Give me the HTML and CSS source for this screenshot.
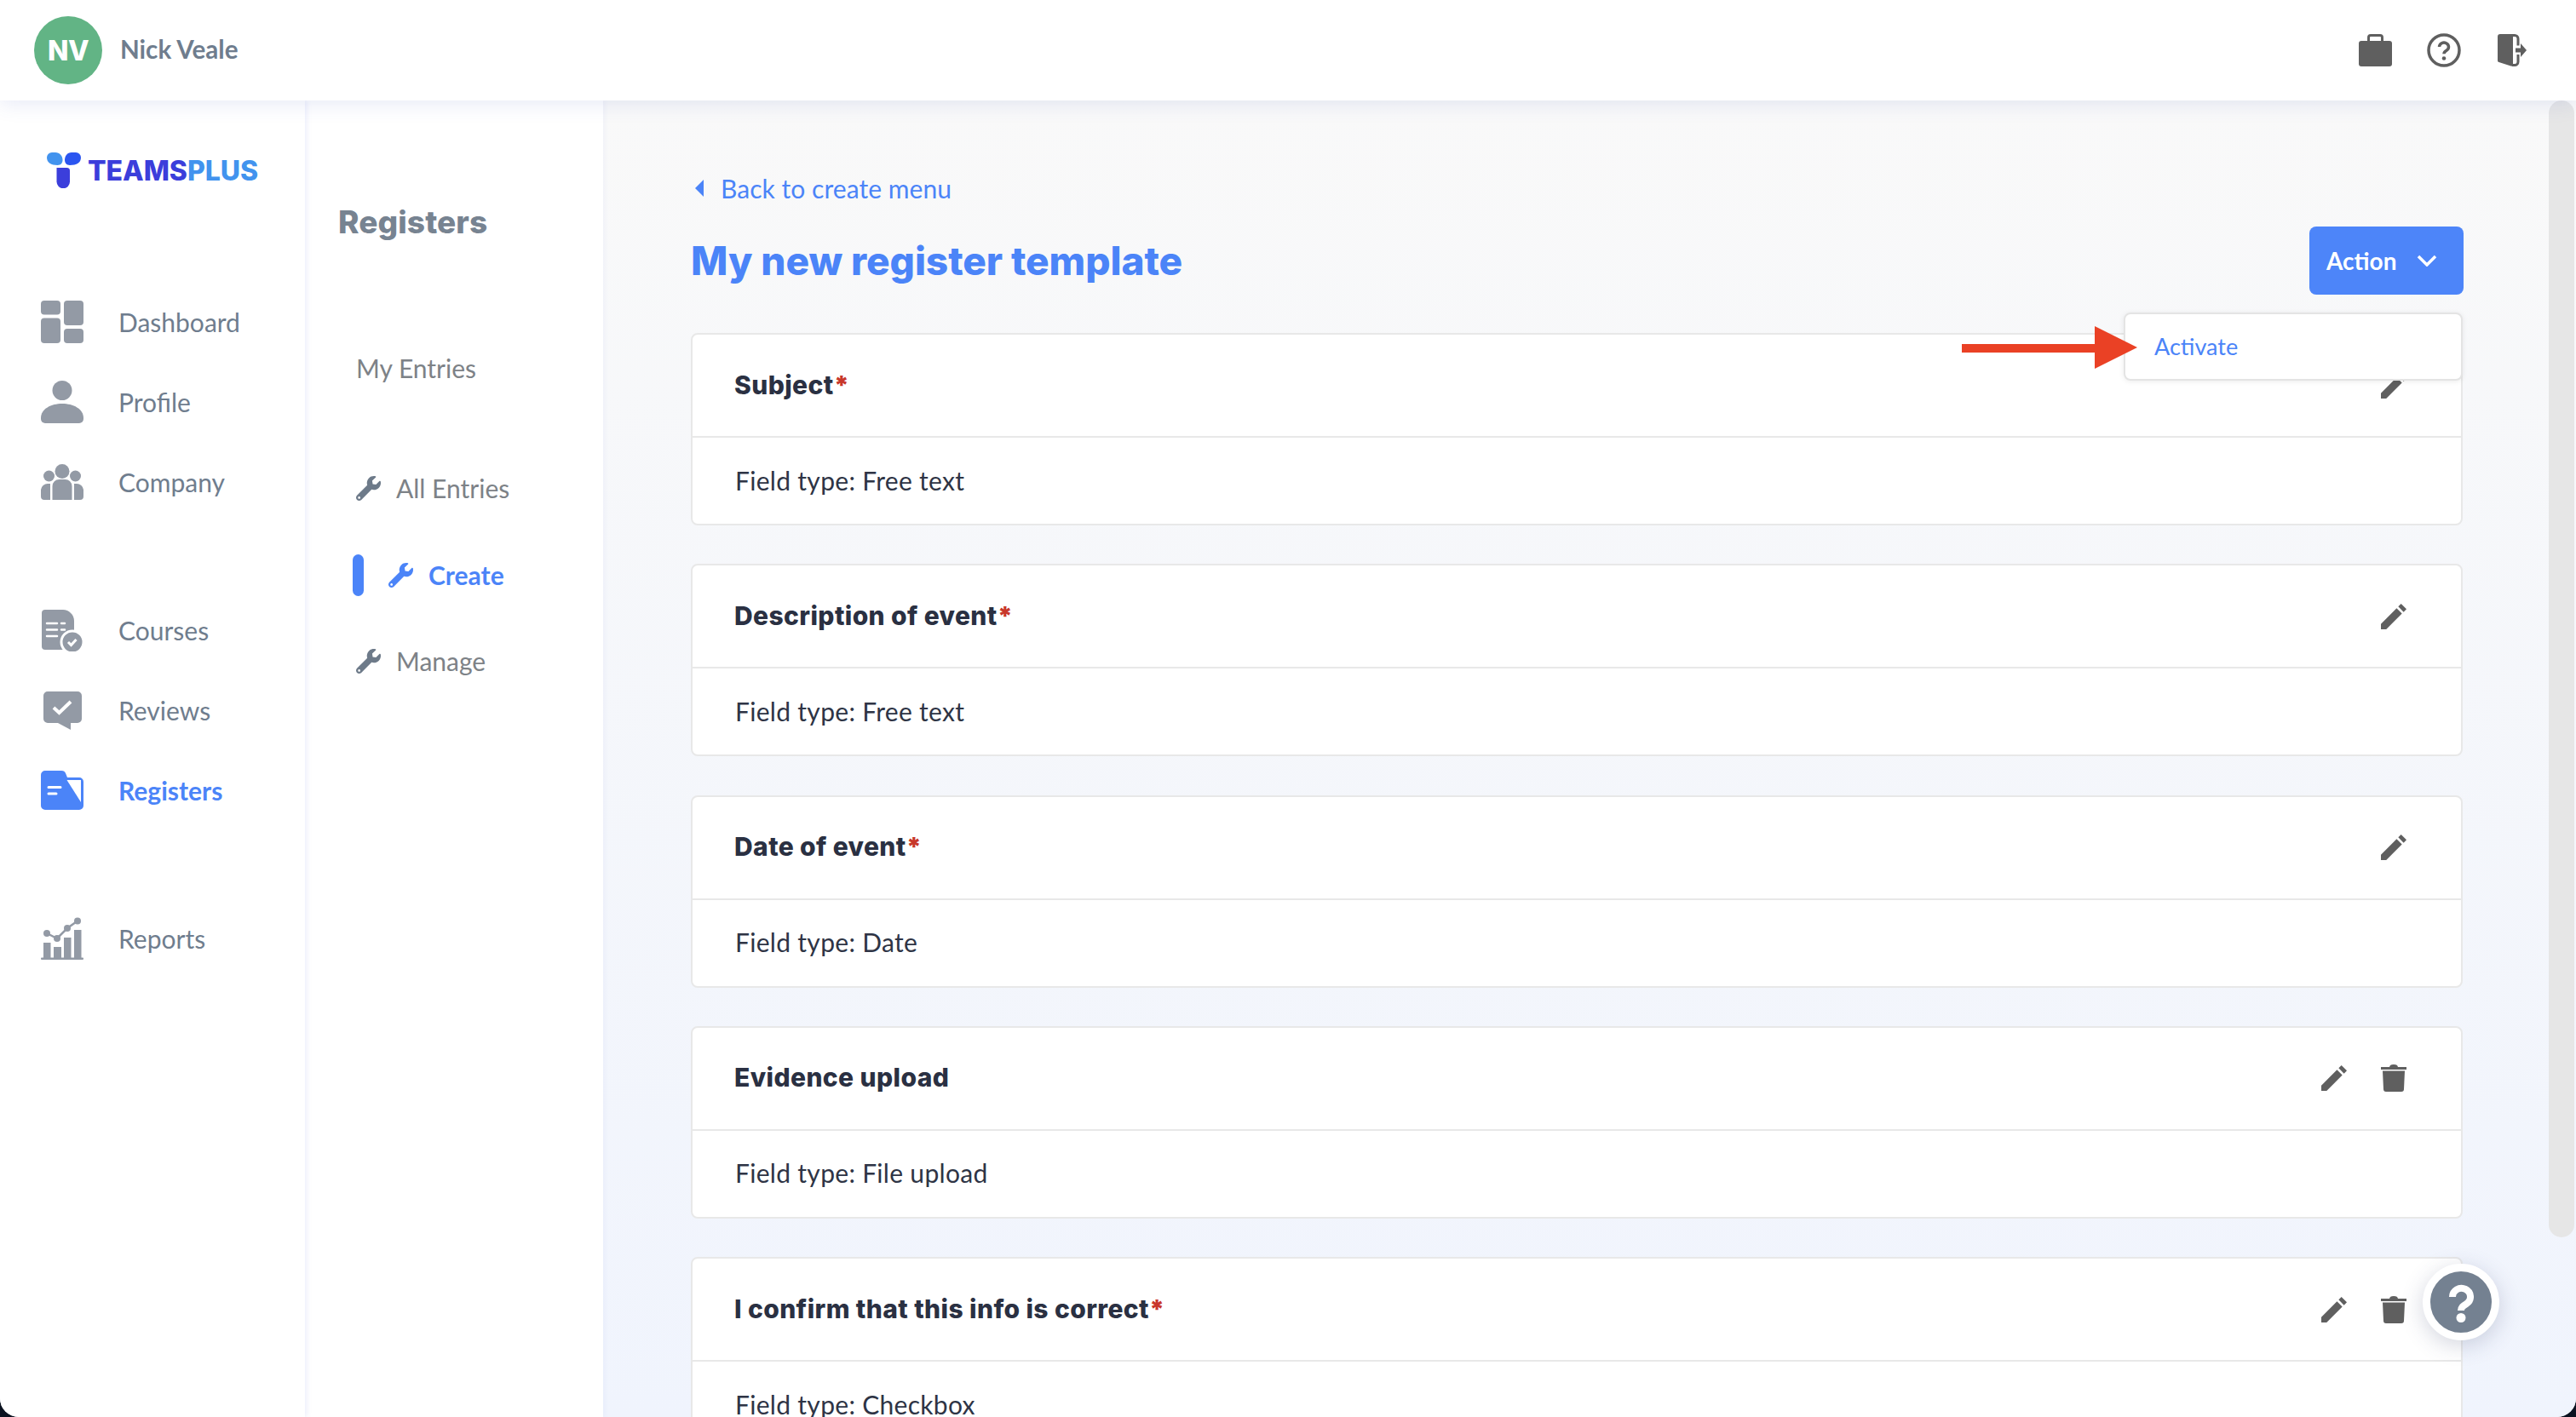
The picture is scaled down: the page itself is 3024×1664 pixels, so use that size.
FILE: index.html
```html
<!DOCTYPE html>
<html lang="en">
<head>
<meta charset="utf-8">
<title>My new register template</title>
<link rel="stylesheet" href="styles.css">
</head>
<body>
<div class="app">
  <header class="topbar">
    <div class="user">
      <div class="avatar">NV</div>
      <span class="user-name">Nick Veale</span>
    </div>
    <div class="top-icons">
      <svg class="ic-brief" viewBox="0 0 39 38"><path d="M11.5 9V4a2.5 2.5 0 0 1 2.5-2.500h11A2.500 2.500 0 0 1 27.500 4v5" fill="none" stroke="#5f5f5f" stroke-width="3"/><rect y="8" width="39" height="30" rx="3" fill="#5f5f5f"/></svg>
      <svg class="ic-help" viewBox="0 0 40 40"><circle cx="20" cy="20" r="18" fill="none" stroke="#5f5f5f" stroke-width="3.500"/><path d="M14.500 16a5.500 5 0 1 1 8.500 4.300c-2 1.300-3 2-3 4" fill="none" stroke="#5f5f5f" stroke-width="3.500"/><circle cx="20" cy="29.500" r="2.300" fill="#5f5f5f"/></svg>
      <svg class="ic-door" viewBox="0 0 34 38"><path d="M0 3a3 3 0 0 1 3-3h10l5 2.500V36a2 2 0 0 1-2.500 1.500L1.500 33A2 2 0 0 1 0 31z" fill="#5f5f5f"/><path d="M13 1.500h7a4 4 0 0 1 4 4v8M24 24v8.500a4 4 0 0 1-4 4h-3" fill="none" stroke="#5f5f5f" stroke-width="3"/><path d="M21 16.500h6V11l7 8-7 8v-5.500h-6z" fill="#5f5f5f"/></svg>
    </div>
  </header>
  <div class="layout">
    <aside class="side-main">
      <div class="logo">
        <svg class="logo-mark" viewBox="0 0 40 42"><path d="M0 6a6 6 0 0 1 6-6h4c5 0 8.500 4 8.500 9 0 3-2 6-6 6C5 15 0 12 0 6z" fill="#4293ee"/><path d="M40 6a6 6 0 0 0-6-6h-5c-5 0-8 4-8 9 0 3 2 6 6 6 8 0 13-3 13-9z" fill="#2b55f0"/><path d="M11.500 18h12a3.500 3.500 0 0 1 3.500 3.500v13a7.750 7.750 0 0 1-15.500 0z" fill="#3b3edb"/></svg>
        <span class="logo-text"><span class="logo-a">TEAMS</span><span class="logo-b">PLUS</span></span>
      </div>
      <nav class="nav">
        <div class="nav-group">
          <a class="nav-item"><svg class="nav-ic" viewBox="0 0 50 50"><g fill="#939aa5"><rect width="23" height="16.500" rx="4"/><rect x="27" width="23" height="29" rx="4"/><rect y="20.500" width="23" height="29.500" rx="4"/><rect x="27" y="33" width="23" height="17" rx="4"/></g></svg><span>Dashboard</span></a>
          <a class="nav-item"><svg class="nav-ic" viewBox="0 0 50 50"><g fill="#939aa5"><circle cx="25" cy="11.500" r="11.500"/><path d="M0 44c0-11 12-17 25-17s25 6 25 17v1a5 5 0 0 1-5 5H5a5 5 0 0 1-5-5z"/></g></svg><span>Profile</span></a>
          <a class="nav-item"><svg class="nav-ic" viewBox="0 0 50 50"><g fill="#939aa5"><circle cx="25" cy="12.500" r="8.500"/><circle cx="9.500" cy="18" r="6.500"/><circle cx="40.500" cy="18" r="6.500"/><path d="M13.500 30a8 8 0 0 1 8-8h7a8 8 0 0 1 8 8v16h-23z"/><path d="M11 27v19H4a4 4 0 0 1-4-4v-8a8 8 0 0 1 8-7z"/><path d="M39 27v19h7a4 4 0 0 0 4-4v-8a8 8 0 0 0-8-7z"/></g></svg><span>Company</span></a>
        </div>
        <div class="nav-group">
          <a class="nav-item"><svg class="nav-ic" viewBox="0 0 50 50"><path d="M1 5a4 4 0 0 1 4-4h21c7 0 13 6 13 13v30a4 4 0 0 1-4 4H5a4 4 0 0 1-4-4z" fill="#939aa5"/><path d="M7 17h12M7 24.500h12M7 32h12" stroke="#fff" stroke-width="2.500" stroke-linecap="round"/><path d="M24 17h4M24 24.500h4" stroke="#fff" stroke-width="2.500" stroke-linecap="round"/><circle cx="37" cy="39" r="13" fill="#939aa5" stroke="#fff" stroke-width="3"/><path d="M32 39l3.500 3.500 6-6.500" fill="none" stroke="#fff" stroke-width="3"/></svg><span>Courses</span></a>
          <a class="nav-item"><svg class="nav-ic" viewBox="0 0 50 50"><path d="M8 3h35a5 5 0 0 1 5 5v27a5 5 0 0 1-5 5h-8v8l-15-8H8a5 5 0 0 1-5-5V8a5 5 0 0 1 5-5z" fill="#939aa5"/><path d="M15 22l6.500 6L35 15" fill="none" stroke="#fff" stroke-width="4"/></svg><span>Reviews</span></a>
          <a class="nav-item nav-active"><svg class="nav-ic" viewBox="0 0 50 46"><path d="M0 5a5 5 0 0 1 5-5h19c3 0 4 1 5 3l2 5h14a5 5 0 0 1 5 5v28a5 5 0 0 1-5 5H5a5 5 0 0 1-5-5z" fill="#4b84f8"/><path d="M30.500 11H47v26z" fill="#fff"/><path d="M9 19.500h14M9 27h9" stroke="#fff" stroke-width="3" stroke-linecap="round"/></svg><span>Registers</span></a>
        </div>
        <div class="nav-group">
          <a class="nav-item"><svg class="nav-ic" viewBox="0 0 50 50"><g fill="#939aa5"><rect y="47.500" width="50" height="2.500" rx="1"/><rect x="3" y="30" width="8.500" height="18"/><rect x="15" y="35" width="9" height="13"/><rect x="27" y="24" width="8.500" height="24"/><rect x="39" y="15" width="8.500" height="33"/><circle cx="7" cy="19" r="4"/><circle cx="19" cy="25" r="4"/><circle cx="31" cy="13" r="4"/><circle cx="43" cy="4.500" r="4"/></g><path d="M7 19l12 6 12-12 12-8.500" fill="none" stroke="#939aa5" stroke-width="2.500"/></svg><span>Reports</span></a>
        </div>
      </nav>
    </aside>
    <aside class="side-sub">
      <h2 class="sub-title">Registers</h2>
      <a class="sub-item sub-first">My Entries</a>
      <a class="sub-item sub-all"><svg class="wrench" viewBox="0 0 512 512"><path d="M507.730 109.100c-2.240-9.030-13.540-12.090-20.120-5.510l-74.360 74.360-67.880-11.310-11.310-67.880 74.360-74.360c6.620-6.620 3.430-17.900-5.660-20.160-47.380-11.740-99.550.91-136.580 37.930-39.640 39.640-50.550 97.100-34.050 147.200L18.740 402.760c-24.990 24.990-24.990 65.510 0 90.500 24.990 24.990 65.510 24.990 90.500 0l213.210-213.210c50.120 16.710 107.470 5.680 147.370-34.220 37.070-37.070 49.700-89.320 37.910-136.730zM64 472c-13.250 0-24-10.750-24-24 0-13.260 10.750-24 24-24s24 10.740 24 24c0 13.250-10.750 24-24 24z"/></svg>All Entries</a>
      <a class="sub-item sub-active"><i class="sub-bar"></i><svg class="wrench" viewBox="0 0 512 512"><path d="M507.730 109.100c-2.240-9.030-13.540-12.090-20.120-5.510l-74.360 74.360-67.880-11.310-11.310-67.880 74.360-74.360c6.620-6.620 3.430-17.900-5.660-20.160-47.380-11.740-99.550.91-136.580 37.930-39.640 39.640-50.550 97.100-34.050 147.200L18.740 402.760c-24.990 24.990-24.990 65.510 0 90.500 24.990 24.990 65.510 24.990 90.500 0l213.210-213.210c50.120 16.710 107.470 5.680 147.370-34.220 37.070-37.070 49.700-89.320 37.910-136.730zM64 472c-13.250 0-24-10.750-24-24 0-13.260 10.750-24 24-24s24 10.740 24 24c0 13.250-10.750 24-24 24z"/></svg>Create</a>
      <a class="sub-item sub-last"><svg class="wrench" viewBox="0 0 512 512"><path d="M507.730 109.100c-2.240-9.030-13.540-12.090-20.120-5.510l-74.360 74.360-67.880-11.310-11.310-67.880 74.360-74.360c6.620-6.620 3.430-17.900-5.660-20.160-47.380-11.740-99.550.91-136.580 37.930-39.640 39.640-50.550 97.100-34.050 147.200L18.740 402.760c-24.990 24.990-24.990 65.510 0 90.500 24.990 24.990 65.510 24.990 90.500 0l213.210-213.210c50.120 16.710 107.470 5.680 147.370-34.220 37.070-37.070 49.700-89.320 37.910-136.730zM64 472c-13.250 0-24-10.750-24-24 0-13.260 10.750-24 24-24s24 10.740 24 24c0 13.250-10.750 24-24 24z"/></svg>Manage</a>
    </aside>
    <main class="main">
      <a class="back"><svg class="back-ic" viewBox="0 0 10 20"><path d="M10 0v20L0 10z"/></svg>Back to create menu</a>
      <div class="title-row">
        <h1 class="page-title">My new register template</h1>
        <button class="action-btn">Action<svg class="chev" viewBox="0 0 24 14"><path d="M2 2l10 10L22 2" fill="none" stroke="#fff" stroke-width="3.500"/></svg></button>
        <div class="menu"><a class="menu-item">Activate</a></div>
      </div>
      <svg class="annot" viewBox="0 0 206 50"><path d="M0 21h156V0l50 25-50 25V31H0z" fill="#ea4125"/></svg>
      <section class="cards">
        <article class="card">
          <div class="card-head"><span class="card-title">Subject<b class="req">*</b></span><div class="card-actions"><svg class="ic-pen" viewBox="3 3 18 18"><path d="M3 17.250V21h3.750L17.810 9.940l-3.750-3.750zM15.200 5l2-2L21 6.800l-2 2z"/></svg></div></div>
          <div class="card-body">Field type: Free text</div>
        </article>
        <article class="card">
          <div class="card-head"><span class="card-title">Description of event<b class="req">*</b></span><div class="card-actions"><svg class="ic-pen" viewBox="3 3 18 18"><path d="M3 17.250V21h3.750L17.810 9.940l-3.750-3.750zM15.200 5l2-2L21 6.800l-2 2z"/></svg></div></div>
          <div class="card-body">Field type: Free text</div>
        </article>
        <article class="card">
          <div class="card-head"><span class="card-title">Date of event<b class="req">*</b></span><div class="card-actions"><svg class="ic-pen" viewBox="3 3 18 18"><path d="M3 17.250V21h3.750L17.810 9.940l-3.750-3.750zM15.200 5l2-2L21 6.800l-2 2z"/></svg></div></div>
          <div class="card-body">Field type: Date</div>
        </article>
        <article class="card">
          <div class="card-head"><span class="card-title">Evidence upload</span><div class="card-actions"><svg class="ic-pen" viewBox="3 3 18 18"><path d="M3 17.250V21h3.750L17.810 9.940l-3.750-3.750zM15.200 5l2-2L21 6.800l-2 2z"/></svg><svg class="ic-trash" viewBox="0 0 30 32"><path d="M0 3h10c.500-2 1.500-3 5-3s4.500 1 5 3h10v3H0zM2 7.500h26L27 29a3 3 0 0 1-3 3H6a3 3 0 0 1-3-3z"/></svg></div></div>
          <div class="card-body">Field type: File upload</div>
        </article>
        <article class="card">
          <div class="card-head"><span class="card-title">I confirm that this info is correct<b class="req">*</b></span><div class="card-actions"><svg class="ic-pen" viewBox="3 3 18 18"><path d="M3 17.250V21h3.750L17.810 9.940l-3.750-3.750zM15.200 5l2-2L21 6.800l-2 2z"/></svg><svg class="ic-trash" viewBox="0 0 30 32"><path d="M0 3h10c.500-2 1.500-3 5-3s4.500 1 5 3h10v3H0zM2 7.500h26L27 29a3 3 0 0 1-3 3H6a3 3 0 0 1-3-3z"/></svg></div></div>
          <div class="card-body">Field type: Checkbox</div>
        </article>
      </section>
      <div class="scroll-thumb"></div>
      <div class="help-fab"><svg viewBox="0 0 72 72"><path d="M26 30a10.500 10 0 1 1 16.500 8c-4 2.500-6.500 4-6.500 8" fill="none" stroke="#fff" stroke-width="8"/><circle cx="36" cy="54.500" r="5.500" fill="#fff"/></svg></div>
    </main>
  </div>
</div>
</body>
</html>
```
FILE: styles.css
```css
* { box-sizing: border-box; }
html, body { margin: 0; height: 1664px; overflow: hidden; background: #0b1220; }
body { font-family: "Lato", "Liberation Sans", sans-serif; font-size: 30px; color: #6f7d8e; }
a { display: flex; align-items: center; text-decoration: none; }
.app { height: 1664px; display: flex; flex-direction: column; background: #fff; border-radius: 0 0 22px 22px; overflow: hidden; }

.topbar { position: relative; z-index: 3; flex: 0 0 118px; display: flex; align-items: center; justify-content: space-between; padding: 0 58px 0 40px; background: #fff; box-shadow: 0 4px 22px rgba(70, 90, 190, .13); }
.user { display: flex; align-items: center; gap: 21px; }
.avatar { width: 80px; height: 80px; border-radius: 50%; background: #62b485; color: #fff; display: flex; align-items: center; justify-content: center; font-family: "Inter", sans-serif; font-weight: 800; font-size: 32px; letter-spacing: -.5px; }
.user-name { font-weight: 700; font-size: 29.600px; color: #6f7d8e; padding-bottom: 3px; }
.top-icons { display: flex; align-items: center; }
.ic-brief { width: 39px; height: 38px; }
.ic-help { width: 40px; height: 40px; margin-left: 41px; }
.ic-door { width: 34px; height: 38px; margin-left: 43px; }

.layout { flex: 1; display: flex; min-height: 0; }
.side-main { position: relative; z-index: 2; flex: 0 0 358px; padding: 61px 0 0 48px; background: #fff; box-shadow: 2px 0 6px rgba(70, 90, 220, .1); }
.logo { display: flex; align-items: center; height: 42px; margin-left: 7px; gap: 8px; }
.logo-mark { width: 40px; height: 42px; flex: none; }
.logo-text { font-family: "Inter", sans-serif; font-weight: 800; font-size: 32px; letter-spacing: -.05px; }
.logo-a { color: #3b3edb; }
.logo-b { color: #4293ee; }
.nav { margin-top: 132px; display: flex; flex-direction: column; gap: 124px; }
.nav-group { display: flex; flex-direction: column; gap: 44px; }
.nav-item { height: 50px; gap: 41px; color: #6f7d8e; }
.nav-ic { width: 50px; height: 50px; flex: none; }
.nav-active { color: #4b84f8; font-weight: 700; }

.side-sub { position: relative; z-index: 1; flex: 0 0 350px; padding: 123px 0 0 39px; background: #fff; box-shadow: 2px 0 6px rgba(70, 90, 220, .05); display: flex; flex-direction: column; }
.sub-title { margin: 0; height: 40px; line-height: 40px; font-family: "Inter", sans-serif; font-weight: 800; font-size: 37px; color: #778391; letter-spacing: .1px; }
.sub-item { height: 40px; margin-left: 21px; gap: 18px; color: #7d8287; }
.sub-first { margin-top: 131px; }
.sub-all { margin-top: 101px; }
.sub-active { margin-top: 62px; margin-left: 17px; color: #4b84f8; font-weight: 700; fill: #4b84f8; }
.sub-last { margin-top: 61px; }
.sub-bar { width: 13px; height: 49px; flex: none; border-radius: 7px; background: #4b84f8; margin-right: 11px; }
.wrench { width: 29px; height: 29px; flex: none; fill: #6d7a89; }
.sub-active .wrench { fill: #4b84f8; }

.main { position: relative; flex: 1; min-width: 0; padding: 83px 133px 0 103px; background: linear-gradient(#f9f9f9, #f0f4fd); overflow: hidden; }
.back { height: 40px; color: #4b84f8; gap: 20px; padding-left: 5px; letter-spacing: .05px; }
.back-ic { width: 10px; height: 20px; fill: #4b84f8; flex: none; }
.title-row { position: relative; margin-top: 25px; height: 80px; display: flex; align-items: center; justify-content: space-between; }
.page-title { margin: 0; font-family: "Inter", sans-serif; font-weight: 800; font-size: 46px; letter-spacing: -.07px; color: #4b84f8; }
.action-btn { width: 181px; height: 80px; border: 0; border-radius: 8px; background: #4d85f9; color: #fff; font-family: "Lato", sans-serif; font-weight: 700; font-size: 28px; display: flex; align-items: center; gap: 24px; padding: 0 0 0 20px; margin-right: -1px; }
.chev { width: 24px; height: 14px; flex: none; }
.menu { position: absolute; z-index: 5; top: 101px; right: 0; width: 398px; height: 80px; background: #fff; border: 2px solid #e4e4e4; border-radius: 8px; box-shadow: 0 1px 6px rgba(0, 0, 0, .08); padding: 0 0 2px 34px; display: flex; align-items: center; }
.menu-item { color: #4b84f8; font-size: 27px; }
.annot { position: absolute; z-index: 6; left: 1595px; top: 265px; width: 206px; height: 50px; }

.cards { margin-top: 45px; display: flex; flex-direction: column; gap: 45.25px; }
.card { flex: none; height: 226px; background: #fff; border: 2px solid #e8e8e8; border-radius: 8px; display: flex; flex-direction: column; }
.card-head { flex: 0 0 121px; border-bottom: 2px solid #e8e8e8; display: flex; align-items: center; justify-content: space-between; padding: 0 64px 0 49px; }
.card-title { font-family: "Inter", sans-serif; font-weight: 800; font-size: 30px; letter-spacing: .4px; color: #2a3042; padding-bottom: 2px; }
.req { color: #c8372b; }
.card-actions { display: flex; align-items: center; gap: 40px; }
.ic-pen { width: 30px; height: 30px; fill: #5f5f5f; }
.ic-trash { width: 30px; height: 32px; fill: #5f5f5f; }
.card-body { flex: 1; display: flex; align-items: center; padding: 0 0 2px 50px; line-height: 30px; color: #2e3445; letter-spacing: .3px; }

.scroll-thumb { position: absolute; z-index: 2; left: 2284px; top: 0; width: 30px; height: 1335px; border-radius: 16px; background: #e6e6e6; }
.help-fab { position: absolute; z-index: 4; left: 2136px; top: 1366px; width: 90px; height: 90px; border-radius: 50%; border: 9px solid #fff; background: #748191; box-shadow: 0 6px 26px rgba(60, 70, 110, .22); }
.help-fab svg { display: block; width: 72px; height: 72px; }
```
